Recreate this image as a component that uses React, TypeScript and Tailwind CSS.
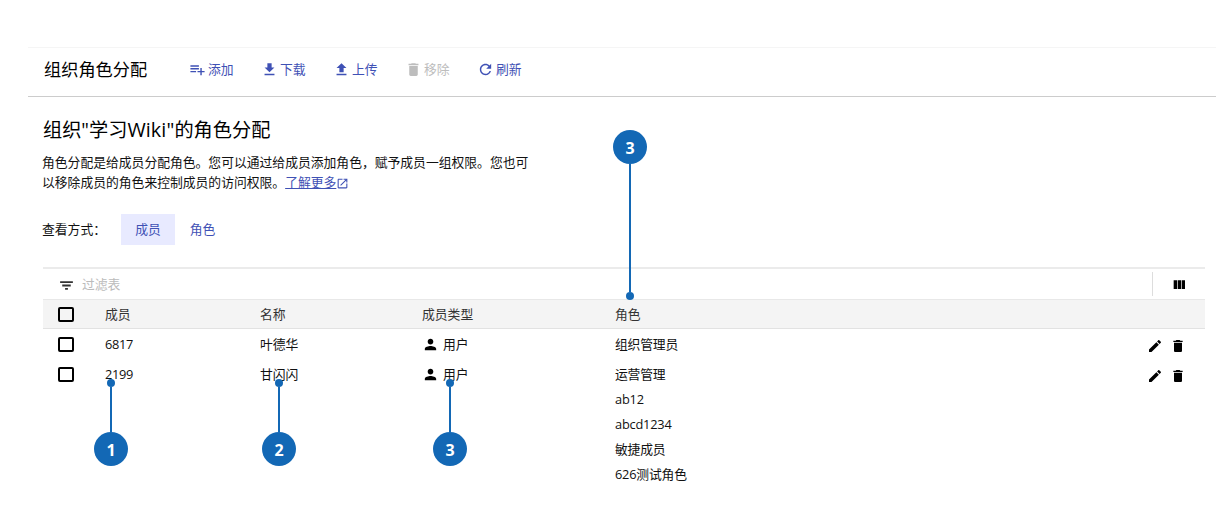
import React from "react";

const paths = {
  add: "M14 10H2v2h12v-2zm0-4H2v2h12V6zm4 8v-4h-2v4h-4v2h4v4h2v-4h4v-2h-4zM2 16h8v-2H2v2z",
  download: "M19 9h-4V3H9v6H5l7 7 7-7zM5 18v2h14v-2H5z",
  upload: "M9 16h6v-6h4l-7-7-7 7h4zm-4 2h14v2H5z",
  trash: "M6 19c0 1.1.9 2 2 2h8c1.1 0 2-.9 2-2V7H6v12zM19 4h-3.5l-1-1h-5l-1 1H5v2h14V4z",
  refresh:
    "M17.65 6.35C16.2 4.9 14.21 4 12 4c-4.42 0-7.99 3.58-7.99 8s3.57 8 7.99 8c3.73 0 6.84-2.55 7.73-6h-2.08c-.82 2.33-3.04 4-5.65 4-3.31 0-6-2.69-6-6s2.69-6 6-6c1.66 0 3.14.69 4.22 1.78L13 11h7V4l-2.35 2.35z",
  filter: "M10 18h4v-2.6h-4v2.6zM3 6v2.6h18V6H3zm3 7.3h12v-2.6H6v2.6z",
  person:
    "M12 12c2.21 0 4-1.79 4-4s-1.79-4-4-4-4 1.79-4 4 1.79 4 4 4zm0 2c-2.67 0-8 1.34-8 4v2h16v-2c0-2.66-5.33-4-8-4z",
  pencil:
    "M3 17.25V21h3.75L17.81 9.94l-3.75-3.75L3 17.25zM20.71 7.04c.39-.39.39-1.02 0-1.41l-2.34-2.34c-.39-.39-1.02-.39-1.41 0l-1.83 1.83 3.75 3.75 1.83-1.83z",
  columns: "M10 18h5V5h-5v13zm-6 0h5V5H4v13zM16 5v13h5V5h-5z",
  external:
    "M19 19H5V5h7V3H5c-1.11 0-2 .9-2 2v14c0 1.1.89 2 2 2h14c1.1 0 2-.9 2-2v-7h-2v7zM14 3v2h3.59l-9.83 9.83 1.41 1.41L19 6.41V10h2V3h-7z",
};

function Icon({ name, className = "size-[17px]" }: { name: keyof typeof paths; className?: string }) {
  return (
    <svg viewBox="0 0 24 24" fill="currentColor" className={`shrink-0 ${className}`}>
      <path d={paths[name]} />
    </svg>
  );
}

const actions: { icon: keyof typeof paths; label: string; disabled?: boolean }[] = [
  { icon: "add", label: "添加" },
  { icon: "download", label: "下载" },
  { icon: "upload", label: "上传" },
  { icon: "trash", label: "移除", disabled: true },
  { icon: "refresh", label: "刷新" },
];

const members = [
  { id: "6817", name: "叶德华", roles: ["组织管理员"] },
  { id: "2199", name: "甘闪闪", roles: ["运营管理", "ab12", "abcd1234", "敏捷成员", "626测试角色"] },
];

const columns = "grid grid-cols-[62px_155px_162px_193px_1fr_65px] items-start";

function Checkbox() {
  return (
    <span className="flex h-[29px] items-center pl-[15px]">
      <span className="h-[15px] w-4 rounded-[2px] border-2 border-black" />
    </span>
  );
}

function Callout({ label, className, up = false }: { label: string; className: string; up?: boolean }) {
  return (
    <div className={`absolute flex w-[34px] items-center ${up ? "flex-col-reverse" : "flex-col"} ${className}`}>
      <span className="flex size-[34px] shrink-0 items-center justify-center rounded-full bg-[#1368b5] pt-px text-base font-bold text-white">
        {label}
      </span>
      <span className="w-0.5 flex-1 bg-[#1368b5]" />
      <span className="size-2 shrink-0 rounded-full bg-[#1368b5]" />
    </div>
  );
}

export default function App() {
  return (
    <div
      lang="zh-CN"
      className="relative h-[506px] w-[1216px] overflow-hidden bg-white pt-[47px] pl-7 font-['Open_Sans','Noto_Sans_CJK_SC',sans-serif] text-[12.8px] text-[#111]"
    >
      <header className="flex h-[50px] items-center border-t border-b border-t-[#f5f5f5] border-b-[#ccc] pb-1.5 pl-4">
        <h1 className="w-[145px] pt-0.5 text-[17.2px] leading-6 text-black">组织角色分配</h1>
        <nav className="flex gap-[27px]">
          {actions.map((a) => (
            <button
              key={a.label}
              className={`flex w-[45px] items-center gap-0.5 leading-5 whitespace-nowrap ${a.disabled ? "text-[#bdbdbd]" : "text-[#3f51b5]"}`}
            >
              <Icon name={a.icon} />
              {a.label}
            </button>
          ))}
        </nav>
      </header>

      <main className="pt-[19px] pr-[11px] pl-[15px]">
        <h2 className="h-7 text-[19.2px] leading-7 whitespace-nowrap text-black">
          组织"学习<span className="text-[19.8px] font-medium tracking-[0.1px]">Wiki"</span>的角色分配
        </h2>
        <p className="mt-[9px] -ml-px w-[492px] leading-[19.5px]">
          角色分配是给成员分配角色。您可以通过给成员添加角色，赋予成员一组权限。您也可以移除成员的角色来控制成员的访问权限。
          <a className="text-[#3f51b5] underline">了解更多</a>
          <Icon name="external" className="inline size-[13px] text-[#3f51b5]" />
        </p>

        <div className="mt-[22px] flex h-[31px] items-center">
          <span className="-ml-px w-[79px]">查看方式：</span>
          <button className="h-[31px] w-[54px] bg-[#e8eaff] text-[#3f51b5]">成员</button>
          <button className="h-[31px] w-[55px] text-[#3f51b5]">角色</button>
        </div>

        <section className="mt-[22px] border-t-2 border-[#ebebeb]">
          <div className="flex h-[30px] items-center pl-[15px]">
            <Icon name="filter" className="mt-0.5 size-[17px] text-[#333]" />
            <span className="ml-[7px] pt-0.5 text-[#bbb]">过滤表</span>
            <div className="ml-auto flex h-6 w-[53px] items-center border-l border-[#ddd] pl-[18px]">
              <Icon name="columns" className="mt-0.5 size-4 text-black" />
            </div>
          </div>

          <div className={`${columns} mb-px h-[30px] border-t border-b border-t-[#e8e8e8] border-b-[#e2e2e2] bg-[#f4f4f4] leading-[29px] text-[#333]`}>
            <Checkbox />
            <span>成员</span>
            <span>名称</span>
            <span>成员类型</span>
            <span>角色</span>
          </div>

          {members.map((m) => (
            <div key={m.id} className={`${columns} min-h-[29.5px] leading-[29px]`}>
              <Checkbox />
              <span className="tracking-[-0.3px]">{m.id}</span>
              <span>{m.name}</span>
              <span className="flex items-center gap-1">
                <Icon name="person" className="size-[17px] text-black" />
                用户
              </span>
              <ul className="pt-0.5">
                {m.roles.map((r) => (
                  <li key={r} className="leading-[25.2px] tracking-[-0.2px]">
                    {r}
                  </li>
                ))}
              </ul>
              <span className="flex h-[29px] items-center gap-[7px] pt-[3px] pl-[7px] text-black">
                <Icon name="pencil" className="size-4" />
                <Icon name="trash" className="size-4" />
              </span>
            </div>
          ))}
        </section>
      </main>

      <Callout label="3" className="top-[130px] left-[613px] h-[170px]" />
      <Callout label="1" up className="top-[379px] left-[94px] h-[87px]" />
      <Callout label="2" up className="top-[379px] left-[262px] h-[87px]" />
      <Callout label="3" up className="top-[379px] left-[433px] h-[87px]" />
    </div>
  );
}
